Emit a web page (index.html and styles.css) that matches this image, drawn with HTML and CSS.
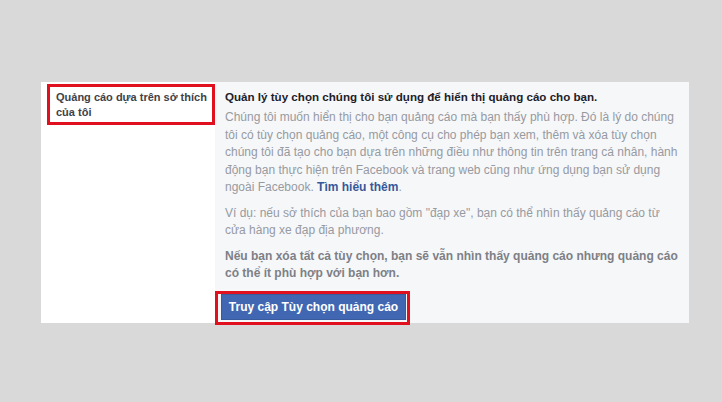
FILE: index.html
```html
<!DOCTYPE html>
<html lang="vi">
<head>
<meta charset="utf-8">
<title>Quảng cáo dựa trên sở thích của tôi</title>
<link rel="stylesheet" href="styles.css">
</head>
<body>
<div class="panel">
  <div class="side">
    <div class="label">Quảng cáo dựa trên sở thích của tôi</div>
  </div>
  <div class="main">
    <div class="heading">Quản lý tùy chọn chúng tôi sử dụng để hiển thị quảng cáo cho bạn.</div>
    <p class="text">Chúng tôi muốn hiển thị cho bạn quảng cáo mà bạn thấy phù hợp. Đó là lý do chúng tôi có tùy chọn quảng cáo, một công cụ cho phép bạn xem, thêm và xóa tùy chọn chúng tôi đã tạo cho bạn dựa trên những điều như thông tin trên trang cá nhân, hành động bạn thực hiện trên Facebook và trang web cũng như ứng dụng bạn sử dụng ngoài Facebook. <a class="link" href="#">Tìm hiểu thêm</a>.</p>
    <p class="text">Ví dụ: nếu sở thích của bạn bao gồm "đạp xe", bạn có thể nhìn thấy quảng cáo từ cửa hàng xe đạp địa phương.</p>
    <p class="text strong">Nếu bạn xóa tất cả tùy chọn, bạn sẽ vẫn nhìn thấy quảng cáo nhưng quảng cáo có thể ít phù hợp với bạn hơn.</p>
    <div class="btn-wrap"><button class="btn">Truy cập Tùy chọn quảng cáo</button></div>
  </div>
</div>
</body>
</html>
```
FILE: styles.css
```css
html, body {
  margin: 0;
  padding: 0;
}
body {
  background: #d9d9d9;
  width: 722px;
  height: 402px;
  font-family: "Liberation Sans", Arial, sans-serif;
  font-size: 12px;
}
.panel {
  margin: 82px 0 0 41px;
  width: 641px;
  height: 241px;
  display: flex;
}
.side {
  width: 177px;
  background: #ffffff;
  padding: 2px 0 0 6px;
  box-sizing: border-box;
}
.label {
  width: 168px;
  box-sizing: border-box;
  border: 3px solid #e0101f;
  padding: 3px 2px 2px 6px;
  font-size: 11px;
  font-weight: bold;
  line-height: 15px;
  color: #3e4249;
}
.main {
  flex: 1;
  background: #f6f7f9;
  padding: 7px 8px 0 10px;
}
.heading {
  font-weight: bold;
  font-size: 11.6px;
  line-height: 16px;
  color: #1d2129;
  margin-bottom: 4px;
}
.text {
  margin: 0 0 8px 0;
  width: 456px;
  line-height: 17.5px;
  color: #969aa1;
}
.text.strong {
  font-weight: bold;
  color: #7d8086;
}
.link {
  color: #365899;
  font-weight: bold;
  text-decoration: none;
}
.btn-wrap {
  display: inline-block;
  margin-left: -10px;
  border: 3px solid #e0101f;
  padding: 0 1px 2px 3px;
  background: #f6f7f9;
}
.btn {
  display: block;
  width: 185px;
  height: 26px;
  background: #4267b2;
  border: 1px solid #3a5a9e;
  color: #ffffff;
  font-family: "Liberation Sans", Arial, sans-serif;
  font-weight: bold;
  font-size: 12px;
  padding: 0;
}
```
